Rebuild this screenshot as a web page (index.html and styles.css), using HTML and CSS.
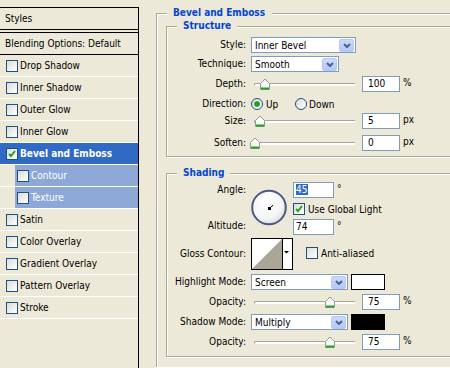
FILE: index.html
```html
<!DOCTYPE html>
<html lang="en">
<head>
  <meta charset="UTF-8">
  <meta name="viewport" content="width=device-width, initial-scale=1.0">
  <title>Layer Style - Bevel and Emboss</title>
  <link rel="stylesheet" href="styles.css">
</head>
<body>
  <div class="dialog">

    <!-- Style list -->
    <div class="style-list">
      <div class="list-head">Styles</div>
      <div class="list-blend">Blending Options: Default</div>
      <div class="list-item"><span class="check"></span>Drop Shadow</div>
      <div class="list-item"><span class="check"></span>Inner Shadow</div>
      <div class="list-item"><span class="check"></span>Outer Glow</div>
      <div class="list-item"><span class="check"></span>Inner Glow</div>
      <div class="list-item selected">
        <span class="check"><svg width="10" height="10" viewBox="0 0 10 10"><path d="M2 5l2 2 4-5" fill="none" stroke="#21a121" stroke-width="2"/></svg></span>Bevel and Emboss
      </div>
      <div class="list-item sub"><span class="check"></span>Contour</div>
      <div class="list-item sub"><span class="check"></span>Texture</div>
      <div class="list-item"><span class="check"></span>Satin</div>
      <div class="list-item"><span class="check"></span>Color Overlay</div>
      <div class="list-item"><span class="check"></span>Gradient Overlay</div>
      <div class="list-item"><span class="check"></span>Pattern Overlay</div>
      <div class="list-item"><span class="check"></span>Stroke</div>
    </div>

    <!-- Settings -->
    <div class="panel">
      <fieldset class="group outer">
        <legend>Bevel and Emboss</legend>

        <fieldset class="group inner structure">
          <legend>Structure</legend>
          <div class="form-grid">
            <div class="label">Style:</div>
            <div class="ctrl">
              <div class="select select-style">
                <span class="select-text">Inner Bevel</span>
                <span class="select-btn"><svg width="8" height="5" viewBox="0 0 8 5"><path d="M1 1l3 3 3-3" fill="none" stroke="#4d6185" stroke-width="2"/></svg></span>
              </div>
            </div>

            <div class="label">Technique:</div>
            <div class="ctrl">
              <div class="select select-tech">
                <span class="select-text">Smooth</span>
                <span class="select-btn"><svg width="8" height="5" viewBox="0 0 8 5"><path d="M1 1l3 3 3-3" fill="none" stroke="#4d6185" stroke-width="2"/></svg></span>
              </div>
            </div>

            <div class="label">Depth:</div>
            <div class="ctrl">
              <div class="slider"><div class="track"></div><svg class="thumb" style="left: 9px" width="10" height="12" viewBox="0 0 10 12"><path d="M0.5 11.5V5.5L5 1l4.5 4.5v6z" fill="#fbfbf8" stroke="#8f9c94"/><rect x="1" y="9.5" width="8" height="2" fill="#21a121"/></svg></div>
              <div class="num">100</div><span class="unit">%</span>
            </div>

            <div class="label">Direction:</div>
            <div class="ctrl">
              <span class="radio-opt first"><span class="radio on"></span>Up</span>
              <span class="radio-opt"><span class="radio"></span>Down</span>
            </div>

            <div class="label">Size:</div>
            <div class="ctrl">
              <div class="slider"><div class="track"></div><svg class="thumb" style="left: 4px" width="10" height="12" viewBox="0 0 10 12"><path d="M0.5 11.5V5.5L5 1l4.5 4.5v6z" fill="#fbfbf8" stroke="#8f9c94"/><rect x="1" y="9.5" width="8" height="2" fill="#21a121"/></svg></div>
              <div class="num">5</div><span class="unit">px</span>
            </div>

            <div class="label">Soften:</div>
            <div class="ctrl">
              <div class="slider"><div class="track"></div><svg class="thumb" style="left: -1px" width="10" height="12" viewBox="0 0 10 12"><path d="M0.5 11.5V5.5L5 1l4.5 4.5v6z" fill="#fbfbf8" stroke="#8f9c94"/><rect x="1" y="9.5" width="8" height="2" fill="#21a121"/></svg></div>
              <div class="num">0</div><span class="unit">px</span>
            </div>
          </div>
        </fieldset>

        <fieldset class="group inner shading">
          <legend>Shading</legend>
          <div class="form-grid">
            <div class="label label-stack"><span>Angle:</span><span>Altitude:</span></div>
            <div class="angle">
              <svg class="dial" width="36" height="37" viewBox="0 0 36 37">
                <defs>
                  <radialGradient id="dialFill" cx="0.4" cy="0.35" r="0.7">
                    <stop offset="0" stop-color="#ffffff"/>
                    <stop offset="0.7" stop-color="#f4f4f2"/>
                    <stop offset="1" stop-color="#d9d9d4"/>
                  </radialGradient>
                </defs>
                <circle cx="18" cy="18.5" r="16.8" fill="url(#dialFill)" stroke="#4a5886" stroke-width="2"/>
                <rect x="17" y="18" width="3" height="3" fill="#000"/>
                <path d="M20 17.5h1.2M21.5 16.2v1" stroke="#000" stroke-width="1"/>
              </svg>
              <div class="angle-fields">
                <div class="ctrl"><div class="num num-angle"><span class="sel">45</span></div><span class="unit">°</span></div>
                <div class="check-row global">
                  <span class="check"><svg width="10" height="10" viewBox="0 0 10 10"><path d="M2 5l2 2 4-5" fill="none" stroke="#21a121" stroke-width="2"/></svg></span>Use Global Light
                </div>
                <div class="ctrl"><div class="num num-angle">74</div><span class="unit">°</span></div>
              </div>
            </div>

            <div class="label label-tall">Gloss Contour:</div>
            <div class="ctrl ctrl-tall">
              <svg class="contour" width="42" height="32" viewBox="0 0 42 32">
                <rect x="0.5" y="0.5" width="41" height="31" fill="#fff" stroke="#000"/>
                <polygon points="1,31 31,1 31,31" fill="#aaa698"/>
                <line x1="31.5" y1="0" x2="31.5" y2="32" stroke="#000"/>
                <polygon points="33,13 38,13 35.5,15.5" fill="#000"/>
              </svg>
              <div class="check-row anti"><span class="check"></span>Anti-aliased</div>
            </div>

            <div class="label">Highlight Mode:</div>
            <div class="ctrl">
              <div class="select select-mode">
                <span class="select-text">Screen</span>
                <span class="select-btn"><svg width="8" height="5" viewBox="0 0 8 5"><path d="M1 1l3 3 3-3" fill="none" stroke="#4d6185" stroke-width="2"/></svg></span>
              </div>
              <span class="swatch swatch-white"></span>
            </div>

            <div class="label">Opacity:</div>
            <div class="ctrl">
              <div class="slider"><div class="track"></div><svg class="thumb" style="left: 74px" width="10" height="12" viewBox="0 0 10 12"><path d="M0.5 11.5V5.5L5 1l4.5 4.5v6z" fill="#fbfbf8" stroke="#8f9c94"/><rect x="1" y="9.5" width="8" height="2" fill="#21a121"/></svg></div>
              <div class="num">75</div><span class="unit">%</span>
            </div>

            <div class="label">Shadow Mode:</div>
            <div class="ctrl">
              <div class="select select-mode">
                <span class="select-text">Multiply</span>
                <span class="select-btn"><svg width="8" height="5" viewBox="0 0 8 5"><path d="M1 1l3 3 3-3" fill="none" stroke="#4d6185" stroke-width="2"/></svg></span>
              </div>
              <span class="swatch swatch-black"></span>
            </div>

            <div class="label">Opacity:</div>
            <div class="ctrl">
              <div class="slider"><div class="track"></div><svg class="thumb" style="left: 74px" width="10" height="12" viewBox="0 0 10 12"><path d="M0.5 11.5V5.5L5 1l4.5 4.5v6z" fill="#fbfbf8" stroke="#8f9c94"/><rect x="1" y="9.5" width="8" height="2" fill="#21a121"/></svg></div>
              <div class="num">75</div><span class="unit">%</span>
            </div>
          </div>
        </fieldset>
      </fieldset>
    </div>

  </div>
</body>
</html>
```

FILE: styles.css
```css
* {
  margin: 0;
  padding: 0;
  box-sizing: border-box;
}

html, body {
  height: 100%;
  overflow: hidden;
}

body {
  background: #ece9d8;
  font-family: "DejaVu Sans Condensed", "Liberation Sans", sans-serif;
  font-size: 10px;
  color: #000;
}

.dialog {
  display: flex;
  height: 100%;
}

/* Style list */
.style-list {
  width: 139px;
  flex-shrink: 0;
  margin-top: 7px;
  border-top: 1px solid #000;
  border-right: 1px solid #000;
}

.list-head {
  height: 22px;
  line-height: 21px;
  padding-left: 5px;
  border-bottom: 1px solid #000;
  margin-bottom: 2px;
}

.list-blend {
  height: 23px;
  line-height: 21px;
  padding-left: 5px;
  border-top: 1px solid #000;
  border-bottom: 1px solid #000;
}

.list-item {
  display: flex;
  align-items: center;
  height: 22px;
  padding-left: 6px;
  border-bottom: 1px solid #fff;
  white-space: nowrap;
}

.list-item .check {
  margin-right: 2px;
}

.list-item.selected {
  background: #316ac5;
  color: #fff;
  font-weight: bold;
}

.list-item.sub {
  padding-left: 17px;
  color: #fff;
  background: linear-gradient(90deg, transparent 15px, #8da7d6 15px);
}

/* XP check boxes and radios */
.check {
  display: inline-flex;
  align-items: center;
  justify-content: center;
  width: 12px;
  height: 12px;
  flex-shrink: 0;
  border: 1px solid #1c5180;
  background: linear-gradient(135deg, #dcdbd5, #ffffff);
}

.radio {
  display: inline-block;
  width: 12px;
  height: 12px;
  flex-shrink: 0;
  border: 1px solid #1c5180;
  border-radius: 50%;
  background: linear-gradient(135deg, #dcdbd5, #ffffff);
}

.radio.on {
  background: radial-gradient(circle, #21a121 2.2px, #6cc06c 2.8px, transparent 3.4px),
              linear-gradient(135deg, #dcdbd5, #ffffff);
}

.radio-opt {
  display: inline-flex;
  align-items: center;
  gap: 2px;
}

.radio-opt.first {
  width: 44px;
  gap: 3px;
}

/* Right panel: group boxes run off the right and bottom edge */
.panel {
  flex: 1;
  min-width: 0;
  padding: 7px 0 0 17px;
}

.group {
  min-width: 0;
  border: 1px solid #aca899;
  border-right: none;
  box-shadow: inset 1px 1px #fff, 0 1px #fff;
}

.group legend {
  font-weight: bold;
  color: #0046d5;
  line-height: 12px;
  background: #ece9d8;
}

.outer {
  border-bottom: none;
  padding: 0 0 10px 9px;
}

.outer > legend {
  margin-left: 1px;
  padding: 0 7px 0 6px;
}

.inner > legend {
  margin-left: 10px;
  padding: 0 6px;
}

.structure {
  margin-top: 1px;
  padding: 5px 0 5px;
}

.shading {
  margin-top: 10px;
  padding: 3px 0 6px;
}

.form-grid {
  display: grid;
  grid-template-columns: 79px 1fr;
  column-gap: 5px;
  align-items: start;
}

.structure .form-grid {
  grid-template-rows: 19px 20px 20px 17px 22px 16px;
}

.shading .form-grid {
  grid-template-rows: 56px 36px 20px 20px 20px 16px;
}

.label {
  text-align: right;
  line-height: 16px;
  white-space: nowrap;
}

.label-stack {
  display: flex;
  flex-direction: column;
  justify-content: space-between;
  height: 52px;
}

.label-tall {
  line-height: 31px;
}

.ctrl {
  display: flex;
  align-items: center;
  height: 16px;
  white-space: nowrap;
}

.ctrl-tall {
  height: 32px;
}

/* Combo boxes */
.select {
  display: flex;
  align-items: center;
  height: 16px;
  border: 1px solid #7f9db9;
  background: #fff;
}

.select-style { width: 105px; }
.select-tech { width: 88px; }
.select-mode { width: 97px; }

.select-text {
  flex: 1;
  padding-left: 3px;
}

.select-btn {
  display: flex;
  align-items: center;
  justify-content: center;
  width: 15px;
  height: 13px;
  margin-right: 1px;
  border: 1px solid #b7c8f2;
  border-radius: 2px;
  background: linear-gradient(#cbd9fc, #b3c8f7);
}

/* Sliders */
.slider {
  position: relative;
  width: 104px;
  height: 16px;
  margin-right: 7px;
  flex-shrink: 0;
}

.track {
  height: 3px;
  margin: 7px 0 0 3px;
  border-top: 1px solid #a5a497;
  border-left: 1px solid #a5a497;
  border-radius: 2px 0 0 2px;
  background: #fff;
}

.thumb {
  position: absolute;
  top: 2px;
}

/* Number fields */
.num {
  width: 38px;
  height: 16px;
  line-height: 14px;
  padding-left: 5px;
  border: 1px solid #7f9db9;
  background: #fff;
}

.num-angle {
  width: 41px;
  padding-left: 2px;
}

.sel {
  background: #316ac5;
  color: #fff;
  padding-right: 1px;
}

.unit {
  margin-left: 3px;
  align-self: flex-start;
  line-height: 14px;
}

/* Angle dial */
.angle {
  display: flex;
  gap: 6px;
}

.dial {
  margin-top: 7px;
}

.angle-fields {
  display: flex;
  flex-direction: column;
}

.check-row {
  display: flex;
  align-items: center;
  gap: 3px;
  white-space: nowrap;
}

.global {
  height: 12px;
  margin: 5px 0 4px;
}

.anti {
  margin-left: 13px;
  margin-top: -2px;
}

.contour {
  display: block;
  flex-shrink: 0;
}

.swatch {
  width: 34px;
  height: 16px;
  margin-left: 3px;
  border: 1px solid #000;
}

.swatch-white { background: #fff; }
.swatch-black { background: #000; }
```
